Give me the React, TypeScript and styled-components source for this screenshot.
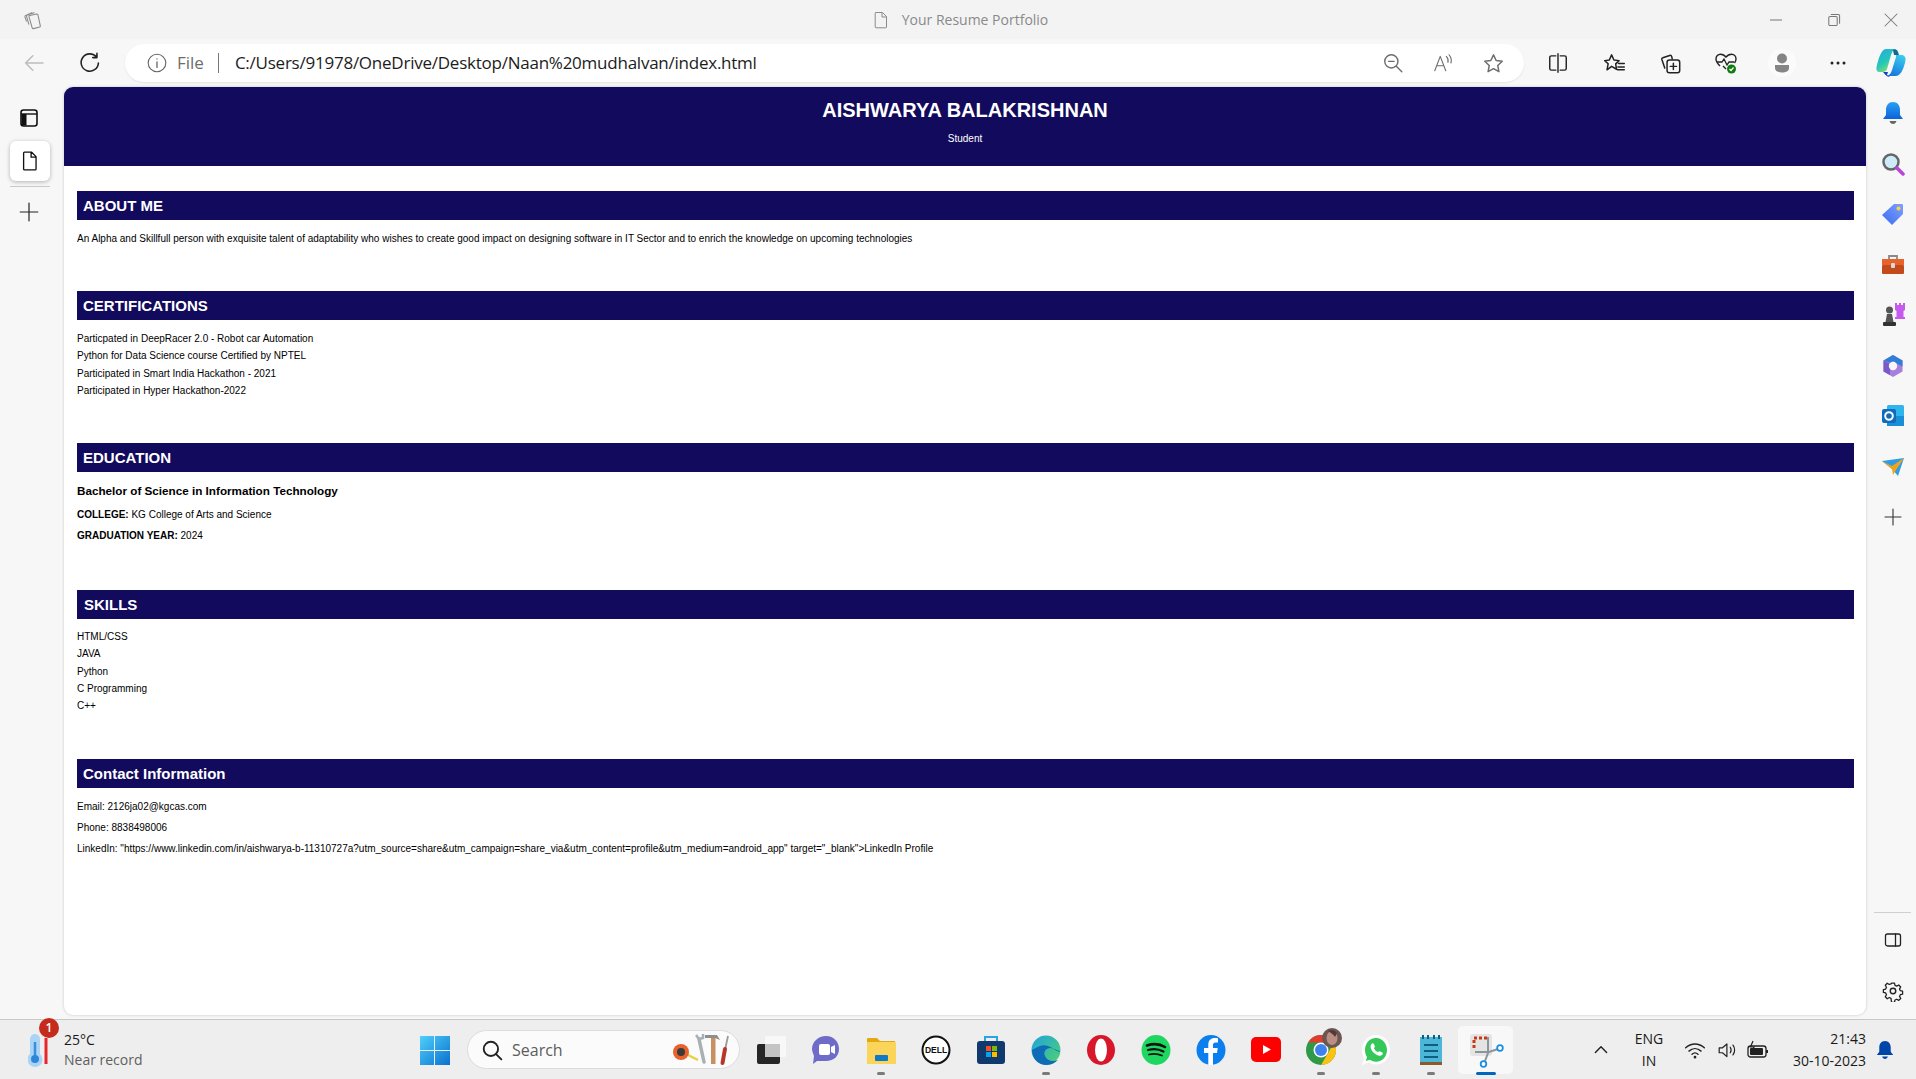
import React from 'react';
import styled, { createGlobalStyle } from 'styled-components';

const GlobalStyle = createGlobalStyle`
  html, body {
    margin: 0;
    padding: 0;
    height: 100%;
    overflow: hidden;
    background: #f7f7f7;
    font-family: "Liberation Sans", Arial, sans-serif;
  }
  #root { height: 100%; }
  * { box-sizing: border-box; }
`;

const navy = '#120a5c';
const uiFont = '"Open Sans", "Noto Sans", sans-serif';

const Shell = styled.div`
  display: flex;
  flex-direction: column;
  width: 1916px;
  height: 1079px;
  overflow: hidden;
`;

const TitleBar = styled.header`
  height: 39px;
  background: #f3f3f3;
  display: grid;
  grid-template-columns: 1fr auto 1fr;
  align-items: center;
  padding-left: 3px;
`;

const TitleLeft = styled.div`
  display: flex;
  align-items: center;
  margin-left: 18px;
`;

const TitleCenter = styled.div`
  display: flex;
  align-items: center;
  gap: 11px;
  font: 14px ${uiFont};
  color: #8a8a8a;
`;

const WindowButtons = styled.div`
  display: flex;
  justify-content: flex-end;
  gap: 7.5px;
`;

const WindowButton = styled.div`
  width: 50px;
  height: 39px;
  display: flex;
  align-items: center;
  justify-content: center;
`;

const Toolbar = styled.div`
  height: 48px;
  background: #f7f7f7;
  display: flex;
  align-items: center;
  padding-left: 6px;
`;

const ToolCell = styled.div<{ $w?: number }>`
  width: ${p => p.$w ?? 56}px;
  height: 38px;
  flex: none;
  display: flex;
  align-items: center;
  justify-content: center;
`;

const AddressBar = styled.div`
  width: 1400px;
  height: 38px;
  margin: 0 6px 0 7px;
  background: #fff;
  border-radius: 19px;
  box-shadow: 0 1px 2px rgba(0, 0, 0, 0.08);
  display: flex;
  align-items: center;
  padding: 0 6px 0 21px;
`;

const FileLabel = styled.span`
  font: 17px ${uiFont};
  color: #6d6d6d;
  margin: 0 0 2px 9px;
`;

const AddressDivider = styled.span`
  width: 1px;
  height: 20px;
  background: #777;
  margin: 0 16px 0 14px;
`;

const Url = styled.span`
  font: 17px ${uiFont};
  color: #1c1c1c;
  flex: 1;
  letter-spacing: -0.24px;
  margin-bottom: 2px;
`;

const Main = styled.div`
  flex: 1;
  display: flex;
  min-height: 0;
  background: #f7f7f7;
`;

const LeftRail = styled.aside`
  width: 64px;
  flex: none;
  display: flex;
  flex-direction: column;
  padding: 13px 14px 0 10px;
`;

const RailIcon = styled.div`
  height: 36px;
  display: flex;
  align-items: center;
  justify-content: center;
  margin-right: 2px;
`;

const ActiveTab = styled.div`
  height: 40px;
  margin-top: 5px;
  background: #fff;
  border-radius: 6px;
  box-shadow: 0 1px 4px rgba(0, 0, 0, 0.28);
  display: flex;
  align-items: center;
  justify-content: center;
`;

const RailDivider = styled.div`
  height: 1px;
  background: #c9c9c9;
  margin: 5px 0 7px;
`;

const Page = styled.main`
  flex: 1;
  min-width: 0;
  margin-bottom: 4px;
  background: #fff;
  border-radius: 9px;
  box-shadow: 0 0 3px rgba(0, 0, 0, 0.2);
  overflow: hidden;
  color: #000;
`;

const ResumeHeader = styled.div`
  height: 79px;
  background: ${navy};
  color: #fff;
  text-align: center;
  padding-top: 12px;
`;

const Name = styled.h1`
  margin: 0;
  font-size: 20px;
  line-height: 23px;
  font-weight: 700;
`;

const Role = styled.p`
  margin: 11px 0 0;
  font-size: 10px;
  line-height: 11px;
`;

const Sections = styled.div`
  padding: 25px 12px 0 13px;
`;

const Section = styled.section<{ $h: number }>`
  height: ${p => p.$h}px;
`;

const SectionTitle = styled.h2<{ $indent?: number }>`
  margin: 0;
  height: 29px;
  background: ${navy};
  color: #fff;
  font-size: 15px;
  line-height: 29px;
  font-weight: 700;
  padding-left: ${p => p.$indent ?? 6}px;
`;

const Body = styled.div<{ $top: number }>`
  padding-top: ${p => p.$top}px;
`;

const Line = styled.p<{ $lh?: number }>`
  margin: 0;
  font-size: 10px;
  line-height: ${p => p.$lh ?? 17.3}px;
`;

const Degree = styled.h3`
  margin: 0 0 6px;
  font-size: 11.7px;
  line-height: 17px;
  font-weight: 700;
`;

const Detail = styled.p`
  margin: 0;
  font-size: 10px;
  line-height: 20.8px;
`;

const RightRail = styled.aside`
  width: 50px;
  flex: none;
  display: flex;
  flex-direction: column;
  padding: 1px 0 3px 3px;
`;

const RightIcon = styled.div`
  height: 50.5px;
  flex: none;
  display: flex;
  align-items: center;
  justify-content: center;
`;

const RightBottom = styled.div`
  margin-top: auto;
  display: flex;
  flex-direction: column;
`;

const RightDivider = styled.div`
  height: 1px;
  margin: 0 5px 2px 5px;
  background: #cfcfcf;
`;

const Taskbar = styled.footer`
  height: 60px;
  background: #eeeeee;
  border-top: 1px solid #c8c8c8;
  display: flex;
  align-items: center;
`;

const Weather = styled.div`
  width: 407px;
  flex: none;
  display: flex;
  align-items: center;
  padding-left: 28px;
  position: relative;
`;

const WeatherBadge = styled.span`
  position: absolute;
  left: 39px;
  top: -12px;
  width: 20px;
  height: 20px;
  border-radius: 50%;
  background: #c42b1c;
  color: #fff;
  font: 600 12px/20px ${uiFont};
  text-align: center;
`;

const WeatherText = styled.div`
  margin-left: 16px;
  display: flex;
  flex-direction: column;
  font: 14px/20px ${uiFont};
  color: #1a1a1a;
`;

const WeatherSub = styled.span`
  color: #5f5f5f;
`;

const TaskCell = styled.div<{ $active?: boolean }>`
  width: 55px;
  height: 48px;
  flex: none;
  display: flex;
  align-items: center;
  justify-content: center;
  position: relative;
  border-radius: 5px;
  background: ${p => (p.$active ? '#f8f8f8' : 'transparent')};
`;

const RunDot = styled.span<{ $active?: boolean }>`
  position: absolute;
  bottom: -1px;
  left: 50%;
  transform: translateX(-50%);
  width: ${p => (p.$active ? 20 : 8)}px;
  height: 3px;
  border-radius: 2px;
  background: ${p => (p.$active ? '#0067c0' : '#7a7a7a')};
`;

const SearchBox = styled.div`
  width: 273px;
  height: 39px;
  margin: 0 3px 0 5px;
  flex: none;
  background: #fbfbfb;
  border: 1px solid #dcdcdc;
  border-radius: 20px;
  display: flex;
  align-items: center;
  padding: 0 9px 0 13px;
  font: 16px ${uiFont};
  color: #5d5d5d;
`;

const SearchLabel = styled.span`
  flex: 1;
  margin-left: 9px;
`;

const Tray = styled.div`
  margin-left: auto;
  display: flex;
  align-items: center;
  padding-right: 12px;
`;

const TrayCell = styled.div<{ $w: number }>`
  width: ${p => p.$w}px;
  display: flex;
  align-items: center;
  justify-content: center;
`;

const Lang = styled.div`
  width: 56px;
  text-align: center;
  font: 14px/22px ${uiFont};
  color: #1a1a1a;
`;

const Clock = styled.div`
  width: 93px;
  text-align: right;
  font: 14px/22px ${uiFont};
  color: #1a1a1a;
`;

type IconProps = { size?: number; color?: string };

const Line2 = ({ size = 20, color = '#222', children }: IconProps & { children: React.ReactNode }) => (
  <svg width={size} height={size} viewBox="0 0 20 20" fill="none" stroke={color} strokeWidth={1.3} strokeLinecap="round" strokeLinejoin="round">
    {children}
  </svg>
);

const StarPath = 'M10 2.5l2.3 4.9 5.3.7-3.9 3.7 1 5.3-4.7-2.6-4.7 2.6 1-5.3-3.9-3.7 5.3-.7z';

const appIcons: { key: string; dot?: boolean; active?: boolean; icon: React.ReactNode }[] = [
  {
    key: 'widgets',
    icon: (
      <svg width="30" height="30" viewBox="0 0 30 30">
        <rect x="9" y="1" width="21" height="21" rx="2" fill="#f8f8f8" />
        <rect x="1" y="9" width="23" height="20" rx="2" fill="#262626" />
        <rect x="9" y="9" width="15" height="13" fill="#c4c4c4" />
      </svg>
    ),
  },
  {
    key: 'meet',
    icon: (
      <svg width="30" height="30" viewBox="0 0 30 30">
        <path d="M15 1c8 0 13 6 13 13s-5 12-13 12H6l-4 3 1-8C2 18 1 16 1 14 1 7 7 1 15 1z" fill="#6f6bc9" />
        <rect x="8" y="9" width="11" height="11" rx="2" fill="#fff" />
        <path d="M20 12l4-2v9l-4-2z" fill="#fff" />
      </svg>
    ),
  },
  {
    key: 'files',
    dot: true,
    icon: (
      <svg width="30" height="30" viewBox="0 0 30 30">
        <path d="M1 4a1 1 0 0 1 1-1h9l3 3h15v23H1z" fill="#e3a90f" />
        <rect x="1" y="7" width="29" height="22" rx="1" fill="#fbd45a" />
        <rect x="9" y="20" width="13" height="6" rx="1" fill="#0c79c9" />
      </svg>
    ),
  },
  {
    key: 'dell',
    icon: (
      <svg width="30" height="30" viewBox="0 0 30 30">
        <circle cx="15" cy="15" r="13.5" fill="#fff" stroke="#111" strokeWidth="2" />
        <text x="15" y="18" fontFamily="Liberation Sans" fontWeight="700" fontSize="8.5" textAnchor="middle" fill="#111">DELL</text>
      </svg>
    ),
  },
  {
    key: 'store',
    icon: (
      <svg width="30" height="30" viewBox="0 0 30 30">
        <path d="M9 6V2h12v4" fill="none" stroke="#2ba5e0" strokeWidth="2" />
        <rect x="1" y="6" width="28" height="23" rx="3" fill="#10396e" />
        <rect x="10" y="11" width="5" height="5" fill="#f25022" />
        <rect x="16" y="11" width="5" height="5" fill="#7fba00" />
        <rect x="10" y="17" width="5" height="5" fill="#00a4ef" />
        <rect x="16" y="17" width="5" height="5" fill="#ffb900" />
      </svg>
    ),
  },
  {
    key: 'edge',
    dot: true,
    icon: (
      <svg width="30" height="32" viewBox="0 0 30 32">
        <defs>
          <linearGradient id="edgeTop" x1="0" y1="0" x2="1" y2="1">
            <stop offset="0" stopColor="#1fa3df" />
            <stop offset="1" stopColor="#52d36b" />
          </linearGradient>
        </defs>
        <circle cx="15" cy="16" r="14.5" fill="url(#edgeTop)" />
        <path d="M1 16c0 9 7 15 14 15 5 0 9-2 12-5-5 2-11 1-13-4-2-4 1-8 5-8 5 0 7 3 10 3C28 21 18 8 9 12c-4 2-7 3-8 4z" fill="#0e6bb8" />
      </svg>
    ),
  },
  {
    key: 'opera',
    icon: (
      <svg width="30" height="32" viewBox="0 0 30 32">
        <ellipse cx="15" cy="16" rx="14" ry="15" fill="#d9172a" />
        <ellipse cx="15" cy="16" rx="6" ry="11.5" fill="#fff" />
      </svg>
    ),
  },
  {
    key: 'spotify',
    icon: (
      <svg width="30" height="32" viewBox="0 0 30 32">
        <ellipse cx="15" cy="16" rx="14.5" ry="15" fill="#1ed760" />
        <g fill="none" stroke="#121212" strokeLinecap="round">
          <path d="M6 11.5c6-2 13-1.500 18 1.500" strokeWidth="2.600" />
          <path d="M7 16c5-1.500 11-1 15.500 1.500" strokeWidth="2.200" />
          <path d="M8 20.500c4-1 9-.8 13 1" strokeWidth="1.800" />
        </g>
      </svg>
    ),
  },
  {
    key: 'facebook',
    icon: (
      <svg width="30" height="32" viewBox="0 0 30 32">
        <ellipse cx="15" cy="16" rx="14.500" ry="15" fill="#0b7ff0" />
        <path d="M17 31V19h4l.7-5H17v-3c0-1.500.7-2.500 2.500-2.500H22V4.300C21 4.100 19.800 4 18.700 4 15 4 12.300 6.300 12.300 10.300V14H8v5h4.300v12z" fill="#fff" />
      </svg>
    ),
  },
  {
    key: 'youtube',
    icon: (
      <svg width="30" height="30" viewBox="0 0 30 30">
        <rect y="2" width="30" height="25" rx="5" fill="#f00" />
        <path d="M12 10l8 4.500-8 4.500z" fill="#fff" />
      </svg>
    ),
  },
  {
    key: 'chrome',
    dot: true,
    icon: (
      <svg width="44" height="44" viewBox="0 0 44 44">
        <circle cx="22" cy="22" r="15" fill="#2e9a48" />
        <path d="M9 14.500a15 15 0 0 1 26 0H22z" fill="#e23c2f" />
        <path d="M35 14.500A15 15 0 0 1 22 37l7-12z" fill="#fbc115" />
        <circle cx="22" cy="22" r="7.500" fill="#fff" />
        <circle cx="22" cy="22" r="6" fill="#3f81ee" />
        <circle cx="33" cy="10" r="10" fill="#6d5552" />
        <ellipse cx="33" cy="10" rx="5.500" ry="7" fill="#b98f84" />
        <path d="M29 3c3-2 7-1 9 2l-2 4c-2-3-4-4-7-6z" fill="#4e3b3a" />
      </svg>
    ),
  },
  {
    key: 'whatsapp',
    dot: true,
    icon: (
      <svg width="30" height="32" viewBox="0 0 30 32">
        <path d="M15 1C7 1 1 8 1 16c0 3 .8 5.500 2 8L1 31l7-2.500c2 1.300 4.500 2 7 2 8 0 14-6.500 14-14.500S23 1 15 1z" fill="#fff" />
        <path d="M15 4C8.500 4 4 9.500 4 16c0 2.500.7 5 2 7l-1.200 4 4-1.300c2 1.300 4 2 6.200 2 6.500 0 11-5.500 11-11.700S21.500 4 15 4z" fill="#35c759" />
        <path d="M10.500 10c1-1 2-.8 2.500.3l.8 2c.2.600 0 1-.8 1.900.8 1.800 2.300 3.200 4 4 .9-.9 1.300-1 1.900-.8l2 .9c1 .5 1.200 1.500.3 2.500-2 2-5.500.8-8.200-1.700-3-2.800-4.500-6.800-2.500-9.100z" fill="#fff" />
      </svg>
    ),
  },
  {
    key: 'notepad',
    dot: true,
    icon: (
      <svg width="24" height="32" viewBox="0 0 24 32">
        <rect x="1" y="3" width="22" height="26" fill="#4cb6d8" />
        <rect x="1" y="28" width="22" height="3" fill="#8a5a2b" />
        <g fill="#0d5f7f">
          <rect x="3" y="1" width="2" height="4" />
          <rect x="8" y="1" width="2" height="4" />
          <rect x="14" y="1" width="2" height="4" />
          <rect x="19" y="1" width="2" height="4" />
          <rect x="5" y="10" width="14" height="2" />
          <rect x="5" y="16" width="14" height="2" />
          <rect x="5" y="22" width="14" height="2" />
        </g>
      </svg>
    ),
  },
  {
    key: 'snip',
    active: true,
    icon: (
      <svg width="36" height="36" viewBox="0 0 36 36">
        <rect x="2" y="2" width="22" height="22" rx="3" fill="#e4e4e4" />
        <path d="M6 16V6h13" fill="none" stroke="#c93a12" strokeWidth="3" strokeDasharray="3 2" />
        <path d="M20 5v16l-3 8M7 20h14l9-3" fill="none" stroke="#8a959c" strokeWidth="2" />
        <circle cx="15.500" cy="32" r="2.800" fill="#fff" stroke="#1c8ee0" strokeWidth="1.800" />
        <circle cx="32" cy="16" r="2.800" fill="#fff" stroke="#1c8ee0" strokeWidth="1.800" />
      </svg>
    ),
  },
];

const App: React.FC = () => (
  <Shell>
    <GlobalStyle />
    <TitleBar>
      <TitleLeft>
        <Line2 size={24} color="#8b8b8b">
          <path d="M6.500 6.500l6.500-1.500c.6 0 1 .3 1.100.8l2 9c.1.500-.1 1-.6 1.100l-5 1.300c-.6.100-1-.2-1.200-.7L6.500 6.500z" strokeWidth={0.9} />
          <path d="M6.500 13.500L4.600 7c-.1-.5.100-1 .6-1.100L11 4M4.500 11L3.300 7.400c-.1-.5.100-1 .6-1.100L9 4" strokeWidth={0.9} />
        </Line2>
      </TitleLeft>
      <TitleCenter>
        <Line2 size={20} color="#8b8b8b">
          <path d="M5 2.500h6.500L15.500 6.500V17a.8.8 0 0 1-.8.8H5a.8.8 0 0 1-.8-.8V3.300A.8.8 0 0 1 5 2.500zM11 2.800V7h4.300" strokeWidth={1} />
        </Line2>
        Your Resume Portfolio
      </TitleCenter>
      <WindowButtons>
        <WindowButton>
          <Line2 size={16} color="#777"><path d="M3 10h14" /></Line2>
        </WindowButton>
        <WindowButton>
          <Line2 size={16} color="#777">
            <rect x="3.500" y="5.500" width="10.500" height="11.500" rx="1.500" />
            <path d="M6.500 3h9a1.500 1.500 0 0 1 1.500 1.500V14" />
          </Line2>
        </WindowButton>
        <WindowButton>
          <Line2 size={16} color="#777"><path d="M2.500 2.500l15 15M17.500 2.500l-15 15" /></Line2>
        </WindowButton>
      </WindowButtons>
    </TitleBar>

    <Toolbar>
      <ToolCell>
        <Line2 size={24} color="#bdbdbd"><path d="M17.500 10H3M9 4l-6 6 6 6" /></Line2>
      </ToolCell>
      <ToolCell>
        <Line2 size={24} color="#222">
          <path d="M15.500 5.200A7.200 7.200 0 1 0 17 10M15.800 2v3.500h-3.500" />
        </Line2>
      </ToolCell>
      <AddressBar>
        <Line2 size={22} color="#666">
          <circle cx="10" cy="10" r="8" strokeWidth={1} />
          <path d="M10 9v5M10 6.200v.2" strokeWidth={1.200} />
        </Line2>
        <FileLabel>File</FileLabel>
        <AddressDivider />
        <Url>C:/Users/91978/OneDrive/Desktop/Naan%20mudhalvan/index.html</Url>
        <ToolCell $w={50}>
          <Line2 size={22} color="#6d6d6d">
            <circle cx="8.500" cy="8.500" r="6" />
            <path d="M6 8.500h5M13 13l5 5" />
          </Line2>
        </ToolCell>
        <ToolCell $w={50}>
          <Line2 size={22} color="#6d6d6d">
            <path d="M2.500 17L7.500 4l5 13M4.300 12.500h6.400M13 4c1.500 1.500 2 3.500 1.500 5.500M15.500 2.500c2 2.500 2.500 5 1.700 7.500" strokeWidth={1} />
          </Line2>
        </ToolCell>
        <ToolCell $w={50}>
          <Line2 size={23} color="#6d6d6d"><path d={StarPath} /></Line2>
        </ToolCell>
      </AddressBar>
      <ToolCell>
        <Line2 size={22}>
          <path d="M8 3.500H4a1.500 1.500 0 0 0-1.500 1.500v10A1.500 1.500 0 0 0 4 16.500h4M12 3.500h4A1.500 1.500 0 0 1 17.500 5v10a1.500 1.500 0 0 1-1.500 1.500h-4M10 1.500v17" />
        </Line2>
      </ToolCell>
      <ToolCell>
        <Line2 size={23}>
          <path d="M7.500 2.500l2 4.500 4.500.5-3 2.800.8 4.700-4.300-2.500-4 3 1-5.300L1.500 7.500l4-.5zM13.500 10h5M13 13h5.500M12.500 15.500H18.500" />
        </Line2>
      </ToolCell>
      <ToolCell>
        <Line2 size={23}>
          <rect x="7" y="7" width="11" height="11" rx="2" />
          <path d="M12.500 9.800v5.400M9.800 12.500h5.400M5 14L2.500 6.500c-.2-.7.100-1.300.8-1.500l6-2c.8-.2 1.500.1 1.700.8L11.500 6" />
        </Line2>
      </ToolCell>
      <ToolCell>
        <svg width="24" height="24" viewBox="0 0 24 24" fill="none">
          <path d="M6 15C3.500 12.500 2 10.500 2 8c0-2.800 2-4.800 4.500-4.800 2.200 0 4 1 5.500 3 1.500-2 3.300-3 5.500-3C20 3.200 22 5.200 22 8c0 1.500-.5 2.800-1.500 4M12 18l-3-3" stroke="#222" strokeWidth="1.400" />
          <path d="M3 11h5l2-3 3 6 2-3h5" stroke="#222" strokeWidth="1.300" />
          <circle cx="17.500" cy="18" r="4.500" fill="#107c10" />
          <path d="M15.500 18l1.500 1.500 2.500-3" stroke="#fff" strokeWidth="1.200" />
        </svg>
      </ToolCell>
      <ToolCell>
        <svg width="28" height="30" viewBox="0 0 28 30">
          <circle cx="14" cy="15" r="14" fill="#fbfbfb" />
          <circle cx="14" cy="10.500" r="5" fill="#858585" />
          <path d="M7 17h14v3c0 3-3 4.500-7 4.500S7 23 7 20z" fill="#858585" />
        </svg>
      </ToolCell>
      <ToolCell>
        <svg width="18" height="6" viewBox="0 0 18 6" fill="#222">
          <circle cx="3" cy="3" r="1.500" />
          <circle cx="9" cy="3" r="1.500" />
          <circle cx="15" cy="3" r="1.500" />
        </svg>
      </ToolCell>
      <ToolCell $w={50}>
        <svg width="30" height="32" viewBox="0 0 30 32">
          <defs>
            <linearGradient id="copA" x1="0" y1="0" x2="0.6" y2="1">
              <stop offset="0" stopColor="#2aa6e6" />
              <stop offset="0.6" stopColor="#23c8b8" />
              <stop offset="1" stopColor="#8ce06a" />
            </linearGradient>
            <linearGradient id="copB" x1="0.6" y1="0" x2="0.2" y2="1">
              <stop offset="0" stopColor="#38c8ee" />
              <stop offset="1" stopColor="#1673dc" />
            </linearGradient>
          </defs>
          <path d="M10 2h10c-3 1-4 3-5 6l-4 14c-.6 2-2 3-4 3H3.500C1 25 0 23 .5 20.500 2 13 5 2 10 2z" fill="url(#copA)" />
          <path d="M17 3c2-1.500 4-.5 5 2l1 3h-5z" fill="#13698f" />
          <path d="M20 8h5c3 0 5 2 4.500 5-1 6-4 16-9.500 16H11c3-1 4-3 5-6l4-13z" fill="url(#copB)" />
          <path d="M7 25h5l-1 3 3 2c-2 0-4-1-7-5z" fill="#1740c8" />
        </svg>
      </ToolCell>
    </Toolbar>

    <Main>
      <LeftRail>
        <RailIcon>
          <svg width="20" height="20" viewBox="0 0 20 20" fill="none">
            <rect x="2" y="2" width="16" height="16" rx="2.500" stroke="#111" strokeWidth="1.600" />
            <path d="M2 6h16" stroke="#111" strokeWidth="1.400" />
            <path d="M2.500 6h5v11.500h-5z" fill="#111" />
          </svg>
        </RailIcon>
        <ActiveTab>
          <Line2 size={22} color="#111">
            <path d="M5 2h6.500L15.500 6v11.200a.8.8 0 0 1-.8.8H5a.8.8 0 0 1-.8-.8V2.800A.8.8 0 0 1 5 2zM11 2.200V6.500h4.300" strokeWidth={1.200} />
          </Line2>
        </ActiveTab>
        <RailDivider />
        <RailIcon>
          <Line2 size={22} color="#222"><path d="M10 2v16M2 10h16" strokeWidth={1.100} /></Line2>
        </RailIcon>
      </LeftRail>

      <Page>
        <ResumeHeader>
          <Name>AISHWARYA BALAKRISHNAN</Name>
          <Role>Student</Role>
        </ResumeHeader>
        <Sections>
          <Section $h={100}>
            <SectionTitle>ABOUT ME</SectionTitle>
            <Body $top={10}>
              <Line>An Alpha and Skillfull person with exquisite talent of adaptability who wishes to create good impact on designing software in IT Sector and to enrich the knowledge on upcoming technologies</Line>
            </Body>
          </Section>
          <Section $h={152}>
            <SectionTitle>CERTIFICATIONS</SectionTitle>
            <Body $top={10}>
              <Line>Particpated in DeepRacer 2.0 - Robot car Automation</Line>
              <Line>Python for Data Science course Certified by NPTEL</Line>
              <Line>Participated in Smart India Hackathon - 2021</Line>
              <Line>Participated in Hyper Hackathon-2022</Line>
            </Body>
          </Section>
          <Section $h={147}>
            <SectionTitle>EDUCATION</SectionTitle>
            <Body $top={10}>
              <Degree>Bachelor of Science in Information Technology</Degree>
              <Detail><strong>COLLEGE:</strong> KG College of Arts and Science</Detail>
              <Detail><strong>GRADUATION YEAR:</strong> 2024</Detail>
            </Body>
          </Section>
          <Section $h={169}>
            <SectionTitle $indent={7}>SKILLS</SectionTitle>
            <Body $top={9}>
              <Line>HTML/CSS</Line>
              <Line>JAVA</Line>
              <Line>Python</Line>
              <Line>C Programming</Line>
              <Line>C++</Line>
            </Body>
          </Section>
          <Section $h={120}>
            <SectionTitle>Contact Information</SectionTitle>
            <Body $top={9}>
              <Line $lh={20.8}>Email: 2126ja02@kgcas.com</Line>
              <Line $lh={20.8}>Phone: 8838498006</Line>
              <Line $lh={20.8}>LinkedIn: "https://www.linkedin.com/in/aishwarya-b-11310727a?utm_source=share&amp;utm_campaign=share_via&amp;utm_content=profile&amp;utm_medium=android_app" target="_blank"&gt;LinkedIn Profile</Line>
            </Body>
          </Section>
        </Sections>
      </Page>

      <RightRail>
        <RightIcon>
          <svg width="22" height="24" viewBox="0 0 22 24">
            <defs>
              <linearGradient id="bell" x1="0" y1="0" x2="0" y2="1">
                <stop offset="0" stopColor="#2aa0f5" />
                <stop offset="1" stopColor="#0b63d8" />
              </linearGradient>
            </defs>
            <path d="M11 1c4.500 0 7 3.500 7 8v5l3 4H1l3-4V9c0-4.500 2.500-8 7-8z" fill="url(#bell)" />
            <path d="M7.500 20h7c-.5 2-2 3-3.500 3s-3-1-3.500-3z" fill="#666" />
          </svg>
        </RightIcon>
        <RightIcon>
          <svg width="24" height="24" viewBox="0 0 24 24">
            <circle cx="10" cy="10" r="7.500" fill="#cfeafa" stroke="#666" strokeWidth="2.500" />
            <path d="M16 16l6 6" stroke="#b845d8" strokeWidth="3.500" strokeLinecap="round" />
          </svg>
        </RightIcon>
        <RightIcon>
          <svg width="24" height="24" viewBox="0 0 24 24">
            <defs>
              <linearGradient id="tag" x1="0" y1="1" x2="1" y2="0">
                <stop offset="0" stopColor="#3a6df0" />
                <stop offset="1" stopColor="#7fa0ff" />
              </linearGradient>
            </defs>
            <path d="M13 2h8a1 1 0 0 1 1 1v9L11 23 1 13z" fill="url(#tag)" />
            <circle cx="17.500" cy="6.500" r="2" fill="#ffd23f" />
          </svg>
        </RightIcon>
        <RightIcon>
          <svg width="24" height="22" viewBox="0 0 24 22">
            <path d="M8 6V2h8v4" fill="none" stroke="#8a8a8a" strokeWidth="1.800" />
            <rect x="1" y="5" width="22" height="6" fill="#e8622c" />
            <rect x="1" y="11" width="22" height="9" rx="1" fill="#c24a1c" />
            <rect x="10" y="9" width="4" height="5" rx="1" fill="#d8d8d8" />
          </svg>
        </RightIcon>
        <RightIcon>
          <svg width="26" height="26" viewBox="0 0 26 26">
            <circle cx="9.500" cy="8" r="3.500" fill="#555" />
            <path d="M7 12h5l1.500 8H5.500z" fill="#555" />
            <rect x="3" y="20" width="13" height="4" rx="1" fill="#333" />
            <path d="M15 1h2v2h2V1h2v2h2V1h2v7l-1.500 1v6H25v2H15v-2h1.500V9L15 8z" fill="#c659ee" />
          </svg>
        </RightIcon>
        <RightIcon>
          <svg width="24" height="24" viewBox="0 0 24 24">
            <path d="M12 1l9.500 5.500v11L12 23l-9.500-5.500v-11z" fill="#a77fdc" />
            <path d="M12 1l9.500 5.500v6L15 9c-1-2-4-2-5.500 0L2.500 6.500z" fill="#2f7fd8" />
            <path d="M2.500 6.500v11L9 21V10z" fill="#7a5ac8" />
            <circle cx="12" cy="12" r="4.200" fill="#f7f7f7" />
          </svg>
        </RightIcon>
        <RightIcon>
          <svg width="24" height="24" viewBox="0 0 24 24">
            <rect x="6" y="1" width="17" height="21" rx="1.500" fill="#30b4ee" />
            <path d="M6 12l17 0v10H6z" fill="#1a8fd8" />
            <rect x="1" y="5" width="14" height="14" rx="2" fill="#0f6cbd" />
            <circle cx="8" cy="12" r="3.800" fill="none" stroke="#fff" strokeWidth="2" />
          </svg>
        </RightIcon>
        <RightIcon>
          <svg width="24" height="20" viewBox="0 0 24 20">
            <path d="M1 4L23 1 17 19 11 12z" fill="#2f9ce8" />
            <path d="M1 4l10 8 1 6 3-5 8-12L11 9z" fill="#f0a417" />
          </svg>
        </RightIcon>
        <RightIcon>
          <Line2 size={20} color="#333"><path d="M10 2v16M2 10h16" strokeWidth={1.100} /></Line2>
        </RightIcon>
        <RightBottom>
          <RightDivider />
          <RightIcon>
            <Line2 size={20} color="#222">
              <rect x="2.500" y="4" width="15" height="12" rx="2" />
              <path d="M12.500 4v12" />
            </Line2>
          </RightIcon>
          <RightIcon>
            <Line2 size={22} color="#222">
              <circle cx="10" cy="10" r="2.500" />
              <path d="M8.500 2h3l.5 2.300 1.800.8 2-1.200 2 2-1.200 2 .8 1.800 2.300.5v3l-2.300.5-.8 1.800 1.200 2-2 2-2-1.200-1.800.8-.5 2.300h-3L8 17.400l-1.800-.8-2 1.200-2-2 1.200-2-.8-1.800L0.300 11.500v-3l2.300-.5.8-1.800-1.200-2 2-2 2 1.200L8 2.800z" transform="translate(1 1) scale(.9)" />
            </Line2>
          </RightIcon>
        </RightBottom>
      </RightRail>
    </Main>

    <Taskbar>
      <Weather>
        <svg width="20" height="40" viewBox="0 0 20 40">
          <path d="M7 4a5 5 0 0 1 5 5v15a7.500 7.500 0 1 1-10 0V9a5 5 0 0 1 5-5z" fill="#a9d4f5" />
          <path d="M7 12v14" stroke="#3a8fdc" strokeWidth="2.500" />
          <circle cx="7" cy="29" r="4" fill="#2e86d8" />
          <path d="M18 8v26" stroke="#e8262a" strokeWidth="3" />
        </svg>
        <WeatherBadge>1</WeatherBadge>
        <WeatherText>
          <span>25°C</span>
          <WeatherSub>Near record</WeatherSub>
        </WeatherText>
      </Weather>
      <TaskCell>
        <svg width="30" height="30" viewBox="0 0 30 30">
          <defs>
            <linearGradient id="win" x1="0" y1="0" x2="1" y2="1">
              <stop offset="0" stopColor="#4fd0fa" />
              <stop offset="1" stopColor="#0a70cf" />
            </linearGradient>
          </defs>
          <path d="M0 1h14v14H0zM15 1h15v14H15zM0 16h14v14H0zM15 16h15v14H15z" fill="url(#win)" />
        </svg>
      </TaskCell>
      <SearchBox>
        <Line2 size={22} color="#222">
          <circle cx="9" cy="9" r="6.500" strokeWidth={1.700} />
          <path d="M13.500 13.500l5 5" strokeWidth={1.700} />
        </Line2>
        <SearchLabel>Search</SearchLabel>
        <svg width="58" height="36" viewBox="0 0 58 36">
          <path d="M14 22l12 6" stroke="#e8d040" strokeWidth="2.500" />
          <circle cx="9" cy="20" r="8" fill="#e8622c" />
          <circle cx="9" cy="20" r="4" fill="#3a3a3a" />
          <path d="M27 7l5 23" stroke="#a8b0b4" strokeWidth="3.500" strokeLinecap="round" />
          <path d="M24 3l3 4 4-1 0-4" fill="none" stroke="#a8b0b4" strokeWidth="2.500" />
          <path d="M33 3h12l3 5-5-2H33z" fill="#8e8e8e" />
          <path d="M39 6h4.500v26H39z" fill="#c89060" />
          <path d="M56 4l-3 14" stroke="#9a9a9a" strokeWidth="1.800" />
          <path d="M53 17l-2.500 14" stroke="#b8352a" strokeWidth="4" strokeLinecap="round" />
        </svg>
      </SearchBox>
      {appIcons.map(app => (
        <TaskCell key={app.key} $active={app.active}>
          {app.icon}
          {(app.dot || app.active) && <RunDot $active={app.active} />}
        </TaskCell>
      ))}
      <Tray>
        <TrayCell $w={40}>
          <Line2 size={16} color="#222"><path d="M3 13l7-7 7 7" strokeWidth={1.800} /></Line2>
        </TrayCell>
        <Lang>ENG<br />IN</Lang>
        <TrayCell $w={36}>
          <Line2 size={22} color="#222">
            <path d="M1.500 8c5-4.500 12-4.500 17 0M4.500 11c3.300-3 7.700-3 11 0M7.300 13.800c1.600-1.400 3.800-1.400 5.400 0" />
            <circle cx="10" cy="16.500" r=".6" fill="#222" />
          </Line2>
        </TrayCell>
        <TrayCell $w={30}>
          <Line2 size={22} color="#222">
            <path d="M2 8v4.500h3L9 16V4.500L5 8zM12 7.500c1 1.500 1 3.500 0 5M14.500 5.500c2 2.500 2 6.500 0 9" strokeWidth={1.100} />
          </Line2>
        </TrayCell>
        <TrayCell $w={30}>
          <svg width="22" height="20" viewBox="0 0 22 20" fill="none">
            <rect x="1" y="6" width="18" height="11" rx="2.500" stroke="#222" strokeWidth="1.300" />
            <rect x="3" y="8" width="13" height="7" rx="1" fill="#222" />
            <path d="M20 10v3" stroke="#222" strokeWidth="2" />
            <path d="M6 1L3.500 7H7L5.500 11" stroke="#222" strokeWidth="1.200" />
          </svg>
        </TrayCell>
        <Clock>21:43<br />30-10-2023</Clock>
        <TrayCell $w={38}>
          <svg width="18" height="20" viewBox="0 0 22 24">
            <path d="M11 1c4.500 0 7 3.500 7 8v5l3 4H1l3-4V9c0-4.500 2.500-8 7-8z" fill="#0046a8" />
            <path d="M7.500 20h7c-.5 2-2 3-3.500 3s-3-1-3.500-3z" fill="#0046a8" />
          </svg>
        </TrayCell>
      </Tray>
    </Taskbar>
  </Shell>
);

export default App;
